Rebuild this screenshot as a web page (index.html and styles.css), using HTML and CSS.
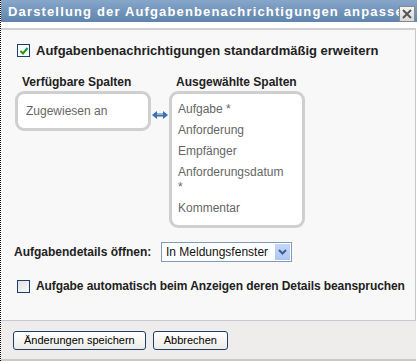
FILE: index.html
```html
<!DOCTYPE html>
<html lang="de">
<head>
  <meta charset="UTF-8">
  <title>Darstellung der Aufgabenbenachrichtigungen anpassen</title>
  <link rel="stylesheet" href="styles.css">
</head>
<body>
  <div class="dialog">
    <div class="titlebar">
      <span class="title">Darstellung der Aufgabenbenachrichtigungen anpassen</span>
      <span class="close">
        <svg width="12" height="12" viewBox="0 0 12 12"><path d="M2 2 L10 10 M10 2 L2 10" stroke="#555" stroke-width="2"/></svg>
      </span>
    </div>
    <div class="content">
      <label class="check-row first">
        <span class="checkbox checked">
          <svg width="10" height="10" viewBox="0 0 10 10"><path d="M1.5 5 L4 7.5 L8.5 2" fill="none" stroke="#1a9a1a" stroke-width="2"/></svg>
        </span>
        Aufgabenbenachrichtigungen standardmäßig erweitern
      </label>

      <div class="columns">
        <div class="col">
          <div class="col-head">Verfügbare Spalten</div>
          <ul class="col-list short">
            <li>Zugewiesen an</li>
          </ul>
        </div>
        <div class="swap">
          <svg width="16" height="8" viewBox="0 0 16 8"><path d="M0 4 L5 0 L5 2.5 L11 2.5 L11 0 L16 4 L11 8 L11 5.5 L5 5.5 L5 8 Z" fill="#3c6fae"/><path d="M5 2.5 L11 2.5 L11 4 L5 4 Z" fill="#8db3e0"/></svg>
        </div>
        <div class="col">
          <div class="col-head">Ausgewählte Spalten</div>
          <ul class="col-list">
            <li>Aufgabe *</li>
            <li>Anforderung</li>
            <li>Empfänger</li>
            <li>Anforderungsdatum *</li>
            <li>Kommentar</li>
          </ul>
        </div>
      </div>

      <div class="open-row">
        <span class="open-label">Aufgabendetails öffnen:</span>
        <span class="select">
          <span class="select-text">In Meldungsfenster</span>
          <span class="select-btn">
            <svg width="9" height="6" viewBox="0 0 9 6"><path d="M1 1 L4.5 4.5 L8 1" fill="none" stroke="#3a5f96" stroke-width="2"/></svg>
          </span>
        </span>
      </div>

      <label class="check-row second">
        <span class="checkbox"></span>
        Aufgabe automatisch beim Anzeigen deren Details beanspruchen
      </label>
    </div>
    <div class="footer">
      <button class="btn">Änderungen speichern</button>
      <button class="btn">Abbrechen</button>
    </div>
  </div>
</body>
</html>
```

FILE: styles.css
```css
html, body {
  margin: 0;
  padding: 0;
  background: #fff;
}
.dialog {
  width: 416px;
  height: 361px;
  border-left: 1px dotted #000;
  display: flex;
  flex-direction: column;
  font-family: "Liberation Sans", Arial, sans-serif;
  font-size: 12px;
  color: #222;
}
.titlebar {
  height: 22px;
  background: linear-gradient(#87a6ca, #5f84ad);
  display: flex;
  align-items: center;
  padding-left: 7px;
  overflow: hidden;
  flex-shrink: 0;
}
.title {
  flex: 1;
  color: #fff;
  font-weight: bold;
  font-size: 13px;
  letter-spacing: 1.15px;
  white-space: nowrap;
  overflow: hidden;
}
.close {
  width: 14px;
  height: 14px;
  margin: 5px 2px 0 0;
  background: linear-gradient(#f4f4f4, #d8d8d8);
  border: 1px solid #8a8a8a;
  display: flex;
  align-items: center;
  justify-content: center;
  flex-shrink: 0;
}
.content {
  flex: 1;
  margin-top: 6px;
  margin-right: 1px;
  background: #f8f8f8;
  border-top: 2px solid #d0d0d0;
  border-right: 1px solid #c8c8c8;
  padding: 13px 0 0 16px;
}
.check-row {
  display: flex;
  align-items: center;
  gap: 6px;
  font-weight: bold;
  font-size: 12px;
  color: #222;
}
.check-row.first {
  font-size: 13px;
}
.checkbox {
  width: 11px;
  height: 11px;
  border: 1px solid #1c3f6e;
  background: linear-gradient(135deg, #e0e0dc, #fafafa);
  display: flex;
  align-items: center;
  justify-content: center;
  flex-shrink: 0;
}
.checkbox.checked {
  background: #fff;
}
.columns {
  display: flex;
  align-items: flex-start;
  margin-top: 17px;
  margin-left: -2px;
}
.col-head {
  font-weight: bold;
  font-size: 12px;
  padding-left: 7px;
  margin-bottom: 2px;
  color: #222;
}
.col-list {
  list-style: none;
  margin: 0;
  padding: 5px 14px 6px 6px;
  width: 110px;
  background: #fff;
  border: 3px solid #cfcfcf;
  border-radius: 9px;
  color: #666;
  font-size: 12px;
}
.col-list li {
  line-height: 15px;
  padding: 3px 0;
}
.col-list.short {
  padding: 7px 14px 6px 8px;
  width: 108px;
}
.swap {
  width: 18px;
  padding-top: 36px;
  display: flex;
  justify-content: center;
}
.open-row {
  display: flex;
  align-items: center;
  margin-top: 14px;
  margin-left: -3px;
}
.open-label {
  font-weight: bold;
  width: 147px;
}
.select {
  width: 129px;
  height: 18px;
  border: 1px solid #7f9db9;
  background: #fff;
  display: flex;
  align-items: center;
  justify-content: space-between;
}
.select-text {
  padding-left: 4px;
  font-size: 12px;
  color: #111;
}
.select-btn {
  width: 15px;
  height: 16px;
  margin-right: 1px;
  background: linear-gradient(#c6d6f7, #b0c6f1);
  display: flex;
  align-items: center;
  justify-content: center;
}
.check-row.second {
  margin-top: 17px;
  letter-spacing: -0.08px;
}
.footer {
  height: 38px;
  background: #eeedeb;
  border-top: 1px solid #c4c8d0;
  border-bottom: 2px solid #c8c8c8;
  margin-right: 1px;
  display: flex;
  align-items: center;
  gap: 7px;
  padding-left: 12px;
  flex-shrink: 0;
}
.btn {
  font-family: "Liberation Sans", Arial, sans-serif;
  font-size: 11px;
  height: 19px;
  padding: 0 10px;
  background: linear-gradient(#ffffff, #ecebe6);
  border: 1px solid #1c3f6e;
  border-radius: 3px;
  color: #000;
}
```
